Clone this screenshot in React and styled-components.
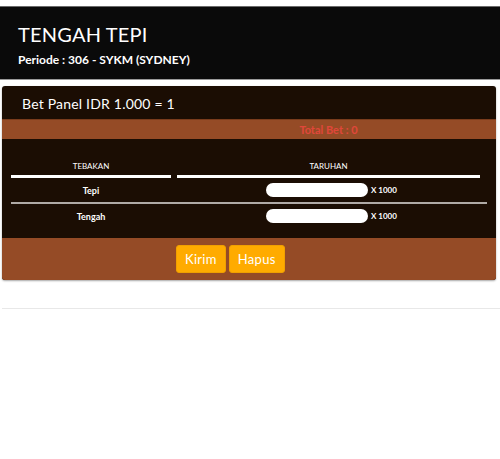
import React from "react";
import styled, { createGlobalStyle } from "styled-components";

const Global = createGlobalStyle`
  html, body { margin: 0; padding: 0; background: #ffffff; }
  body { font-family: Lato, "Open Sans", sans-serif; }
  * { box-sizing: border-box; }
`;

const Page = styled.div`
  padding-top: 6px;
  width: 500px;
`;

const Header = styled.header`
  background: #0a0a0a;
  border-top: 1px solid #6a6a6a;
  border-bottom: 1px solid #9a9a9a;
  height: 74px;
  padding: 15px 18px 0;
  color: #ffffff;
`;

const Title = styled.h1`
  margin: 0;
  font-size: 20px;
  font-weight: 400;
  line-height: 24px;
  letter-spacing: 0.2px;
`;

const Period = styled.div`
  margin-top: 6px;
  font-size: 12px;
  font-weight: 700;
  line-height: 16px;
`;

const Panel = styled.section`
  margin: 6px 4px 0 2px;
  background: #1b0d03;
  border-radius: 3px;
  overflow: hidden;
  box-shadow: 0 1px 2px rgba(0, 0, 0, 0.35);
`;

const PanelTitle = styled.div`
  height: 33px;
  padding: 10px 0 0 20px;
  color: #ffffff;
  font-size: 14px;
  line-height: 16px;
  letter-spacing: 0.2px;
`;

const Grid = styled.div`
  display: grid;
  grid-template-columns: 160px 303px;
  column-gap: 6px;
  padding-left: 9px;
`;

const TotalBar = styled(Grid)`
  height: 20px;
  background: #954b26;
  border-top: 1px solid #7a3c1c;
  align-items: center;
`;

const TotalText = styled.div`
  grid-column: 2;
  text-align: center;
  color: #e0473a;
  font-size: 11px;
  font-weight: 700;
`;

const Body = styled.div`
  padding: 22px 0 10px;
`;

const HeadCell = styled.div`
  text-align: center;
  color: #ffffff;
  font-size: 8px;
  line-height: 10px;
  padding-bottom: 4px;
  border-bottom: 3px solid #ffffff;
`;

const Row = styled.div`
  box-sizing: content-box;
  display: grid;
  grid-template-columns: 160px 1fr;
  column-gap: 6px;
  margin: 0 9px 0 9px;
  height: 24px;
  align-items: center;
  border-top: ${(p) => (p.$divider ? "2px solid #b0aaa6" : "none")};
`;

const Label = styled.div`
  text-align: center;
  color: #ffffff;
  font-size: 9px;
  font-weight: 700;
`;

const BetCell = styled.div`
  display: flex;
  align-items: center;
  padding-left: 89px;
`;

const BetInput = styled.input`
  width: 102px;
  height: 14px;
  border: none;
  border-radius: 7px;
  background: #ffffff;
  padding: 0;
  outline: none;
`;

const Multiplier = styled.span`
  margin-left: 3px;
  color: #ffffff;
  font-size: 8px;
  font-weight: 700;
`;

const Footer = styled.div`
  height: 42px;
  background: #954b26;
  display: flex;
  align-items: center;
  gap: 3px;
  padding-left: 174px;
`;

const Button = styled.button`
  height: 28px;
  padding: 0 8px;
  border: 1px solid #f0a000;
  border-radius: 3px;
  background: #ffab00;
  color: #ffffff;
  font-family: Lato, "Open Sans", sans-serif;
  font-size: 13px;
  letter-spacing: 0.3px;
`;

const Rule = styled.hr`
  margin: 28px 0 0 2px;
  border: none;
  border-top: 1px solid #e8e8e8;
`;

const rows = [
  { name: "Tepi", divider: false },
  { name: "Tengah", divider: true },
];

export default function App() {
  return (
    <Page>
      <Global />
      <Header>
        <Title>TENGAH TEPI</Title>
        <Period>Periode : 306 - SYKM (SYDNEY)</Period>
      </Header>
      <Panel>
        <PanelTitle>Bet Panel IDR 1.000 = 1</PanelTitle>
        <TotalBar>
          <TotalText>Total Bet : 0</TotalText>
        </TotalBar>
        <Body>
          <Grid>
            <HeadCell>TEBAKAN</HeadCell>
            <HeadCell>TARUHAN</HeadCell>
          </Grid>
          {rows.map((r) => (
            <Row key={r.name} $divider={r.divider}>
              <Label>{r.name}</Label>
              <BetCell>
                <BetInput type="text" />
                <Multiplier>X 1000</Multiplier>
              </BetCell>
            </Row>
          ))}
        </Body>
        <Footer>
          <Button>Kirim</Button>
          <Button>Hapus</Button>
        </Footer>
      </Panel>
      <Rule />
    </Page>
  );
}
